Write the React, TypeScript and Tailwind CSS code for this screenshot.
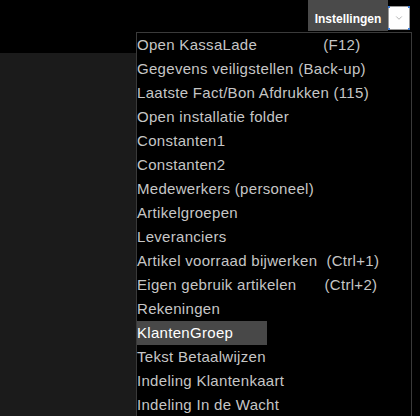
import { ChevronDown } from "lucide-react";

interface MenuItem {
  label: string;
  shortcut?: string;
  gap?: string;
}

const items: MenuItem[] = [
  { label: "Open KassaLade", shortcut: "(F12)", gap: "ml-[66px]" },
  { label: "Gegevens veiligstellen (Back-up)" },
  { label: "Laatste Fact/Bon Afdrukken (115)" },
  { label: "Open installatie folder" },
  { label: "Constanten1" },
  { label: "Constanten2" },
  { label: "Medewerkers (personeel)" },
  { label: "Artikelgroepen" },
  { label: "Leveranciers" },
  { label: "Artikel voorraad bijwerken", shortcut: "(Ctrl+1)", gap: "ml-[9px]" },
  { label: "Eigen gebruik artikelen", shortcut: "(Ctrl+2)", gap: "ml-[28px]" },
  { label: "Rekeningen" },
  { label: "KlantenGroep" },
  { label: "Tekst Betaalwijzen" },
  { label: "Indeling Klantenkaart" },
  { label: "Indeling In de Wacht" },
];

const active = "KlantenGroep";

export default function App() {
  return (
    <div className="relative w-[420px] h-[416px] overflow-hidden bg-black font-['Liberation_Sans',Arial,sans-serif]">
      {/* top bar */}
      <div className="flex h-[32px] justify-end pr-[10px]">
        <div className="flex h-[31px] w-[80px] items-start justify-center bg-[#4a4a4a] pt-[10px] text-[12px] font-bold text-white">
          Instellingen
        </div>
        <div className="relative mt-[6px] flex h-[24px] w-[22px] items-center justify-center border border-[#9a9a9a] bg-white">
          <ChevronDown size={10} strokeWidth={1.25} className="text-[#707070]" />
          <span className="absolute -left-[1px] -top-[1px] h-[2px] w-[2px] bg-[#3b7bd4]" />
          <span className="absolute -right-[1px] -top-[1px] h-[2px] w-[2px] bg-[#3b7bd4]" />
          <span className="absolute -left-[1px] -bottom-[1px] h-[2px] w-[2px] bg-[#3b7bd4]" />
          <span className="absolute -right-[1px] -bottom-[1px] h-[2px] w-[2px] bg-[#3b7bd4]" />
        </div>
      </div>

      {/* page body */}
      <div className="flex h-[384px]">
        <div className="mt-[21px] w-[136px] bg-[#1b1b1b]" />
        <div className="flex-1 bg-black" />
      </div>

      {/* dropdown menu */}
      <div className="absolute left-[136px] top-[32px] w-[276px] border-l border-r border-t border-[#3a3a3a] bg-black">
        {items.map((item) => {
          const isActive = item.label === active;
          return (
            <div key={item.label} className="flex h-[24px] items-center">
              <span
                className={`flex h-[24px] items-center whitespace-pre pr-[4px] text-[15px] tracking-[0.3px] ${
                  isActive ? "w-[130px] bg-[#484848] text-white" : "text-[#c6c6c6]"
                }`}
              >
                {item.label}
                {item.shortcut && <span className={item.gap}>{item.shortcut}</span>}
              </span>
            </div>
          );
        })}
      </div>
    </div>
  );
}
